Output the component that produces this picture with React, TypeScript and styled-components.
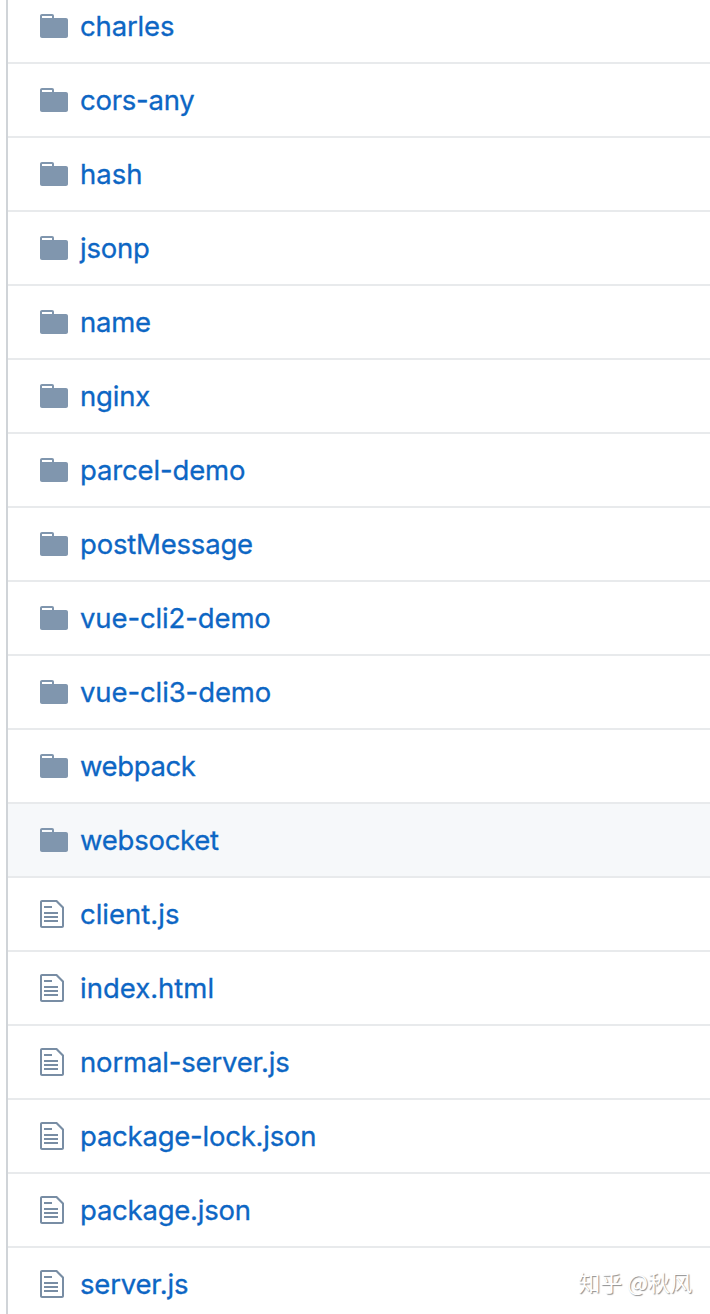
import React from "react";
import styled, { createGlobalStyle } from "styled-components";

const GlobalStyle = createGlobalStyle`
  body {
    margin: 0;
    background: #fff;
  }
`;

const Page = styled.main`
  position: relative;
  box-sizing: border-box;
  width: 710px;
  height: 1314px;
  padding-left: 6px;
  overflow: hidden;
  background: #fff;
  font-family: Inter, "Liberation Sans", sans-serif;
`;

const FileList = styled.ul`
  box-sizing: border-box;
  margin: -10px 0 0;
  padding: 0;
  list-style: none;
  border-left: 2px solid #d0d4d8;
`;

const Row = styled.li<{ $active?: boolean }>`
  display: flex;
  align-items: center;
  box-sizing: border-box;
  height: 74px;
  padding-left: 32px;
  border-bottom: 2px solid #e8eaec;
  background: ${(p) => (p.$active ? "#f6f8fa" : "#fff")};
`;

const IconCell = styled.span<{ $file?: boolean }>`
  display: flex;
  width: 40px;
  color: ${(p) => (p.$file ? "#788da4" : "#8096ae")};
`;

const Name = styled.a<{ $spacing: number }>`
  color: #0d66c4;
  font-size: 27.5px;
  line-height: 40px;
  letter-spacing: ${(p) => p.$spacing}px;
  white-space: nowrap;
  -webkit-text-stroke: 0.3px #0d66c4;
`;

const Watermark = styled.div`
  position: absolute;
  right: 18px;
  bottom: 17px;
  color: #fff;
  font-family: "Noto Sans CJK SC", sans-serif;
  font-size: 22px;
  line-height: 32px;
  white-space: nowrap;
  text-shadow: 1px 1px 1px rgba(0, 0, 0, 0.45);
`;

const FolderIcon = () => (
  <svg width="28" height="32" viewBox="0 0 14 16" fill="currentColor">
    <path
      fillRule="evenodd"
      d="M13 4H7V3c0-.66-.31-1-1-1H1c-.55 0-1 .45-1 1v10c0 .55.45 1 1 1h12c.55 0 1-.45 1-1V5c0-.55-.45-1-1-1zM6 4H1V3h5v1z"
    />
  </svg>
);

const FileIcon = () => (
  <svg width="24" height="32" viewBox="0 0 12 16" fill="currentColor">
    <path
      fillRule="evenodd"
      d="M6 5H2V4h4v1zM2 8h7V7H2v1zm0 2h7V9H2v1zm0 2h7v-1H2v1zm10-7.5V14c0 .55-.45 1-1 1H1c-.55 0-1-.45-1-1V2c0-.55.45-1 1-1h7.5L12 4.5zM11 5L8 2H1v12h10V5z"
    />
  </svg>
);

interface Entry {
  name: string;
  file?: boolean;
  active?: boolean;
  spacing?: number;
}

const entries: Entry[] = [
  { name: "charles", spacing: -0.15 },
  { name: "cors-any", spacing: -0.25 },
  { name: "hash" },
  { name: "jsonp", spacing: -0.2 },
  { name: "name", spacing: -0.25 },
  { name: "nginx", spacing: -0.2 },
  { name: "parcel-demo", spacing: -0.15 },
  { name: "postMessage", spacing: -0.2 },
  { name: "vue-cli2-demo", spacing: -0.12 },
  { name: "vue-cli3-demo", spacing: -0.1 },
  { name: "webpack", spacing: -0.4 },
  { name: "websocket", spacing: -0.25, active: true },
  { name: "client.js", file: true },
  { name: "index.html", file: true },
  { name: "normal-server.js", spacing: -0.17, file: true },
  { name: "package-lock.json", spacing: -0.23, file: true },
  { name: "package.json", spacing: -0.23, file: true },
  { name: "server.js", spacing: -0.2, file: true },
];

export default function App() {
  return (
    <>
      <GlobalStyle />
      <Page>
        <FileList>
          {entries.map((e) => (
            <Row key={e.name} $active={e.active}>
              <IconCell $file={e.file}>{e.file ? <FileIcon /> : <FolderIcon />}</IconCell>
              <Name $spacing={e.spacing ?? 0}>{e.name}</Name>
            </Row>
          ))}
        </FileList>
        <Watermark>知乎 @秋风</Watermark>
      </Page>
    </>
  );
}
